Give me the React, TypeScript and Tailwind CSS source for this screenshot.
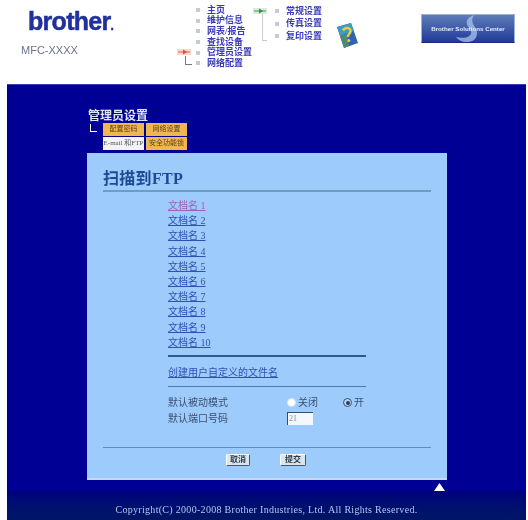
import React from "react";

const serif = "font-['Liberation_Serif','Noto_Sans_CJK_SC',serif]";

const leftNav = ["主页", "维护信息", "网表/报告", "查找设备", "管理员设置", "网络配置"];
const rightNav = ["常规设置", "传真设置", "复印设置"];
const files = ["文档名 1", "文档名 2", "文档名 3", "文档名 4", "文档名 5", "文档名 6", "文档名 7", "文档名 8", "文档名 9", "文档名 10"];

function NavItem({ label }: { label: string }) {
  return (
    <div className="flex h-[10.6px] items-center gap-[7px]">
      <span className="h-[4px] w-[4px] shrink-0 bg-[#c4cbd4]" />
      <span className={`whitespace-nowrap text-[9px] leading-none font-bold text-[#3a3ab8] ${serif}`}>{label}</span>
    </div>
  );
}

function Arrow({ color, box }: { color: string; box: string }) {
  return (
    <svg width="14" height="6" viewBox="0 0 14 6" className="shrink-0">
      <rect x="0" y="0" width="14" height="6" fill={box} />
      <rect x="1" y="2.4" width="12" height="1.2" fill={color} opacity="0.7" />
      <path d="M6 0.5 L10 3 L6 5.5 Z" fill={color} />
    </svg>
  );
}

function HelpBook() {
  return (
    <svg width="24" height="27" viewBox="0 0 24 27" className="mt-[22px] shrink-0">
      <path d="M2 5 L16 1 L23 21 L9 26 Z" fill="#2f62b0" />
      <path d="M2 5 L16 1 L19 9 L5 14 Z" fill="#3d9cc0" />
      <path d="M5 14 L12 12 L14 24 L9 26 Z" fill="#4f8a70" />
      <path d="M8 8.5 C10 5 16 5 15.5 9.5 C15.2 12 12.5 12 13 15" fill="none" stroke="#e8d040" strokeWidth="2.4" />
      <circle cx="13.8" cy="18.5" r="1.5" fill="#e8d040" />
    </svg>
  );
}

function SolutionsCenter() {
  return (
    <div className="relative mt-[14px] ml-[62px] flex h-[29px] w-[94px] shrink-0 items-center justify-center overflow-hidden border border-[#9fb2d8] border-b-[#1c2a80] bg-gradient-to-b from-[#5f7cb8] via-[#3f5ca8] to-[#24389a]">
      <svg width="30" height="29" viewBox="0 0 30 29" className="absolute top-0 left-[30px]">
        <path d="M22 0 C12 4 14 10 18 14 C22 19 16 25 4 22 C10 30 26 29 25 17 C24 11 17 8 22 0 Z" fill="#a9c4e8" opacity="0.75" />
      </svg>
      <span className="relative whitespace-nowrap text-[6.2px] font-bold text-[#e4ecf8] font-['Liberation_Sans',sans-serif]">
        Brother Solutions Center
      </span>
    </div>
  );
}

function Header() {
  return (
    <div className="flex h-[84px] shrink-0 bg-white">
      <div className="w-[177px] shrink-0 pt-[8px] pl-[21px]">
        <div className="pl-[7px] text-[25px] leading-[26px] font-bold tracking-[-0.7px] text-[#20309c] [-webkit-text-stroke:0.5px_#20309c] font-['Liberation_Sans',sans-serif]">
          brother<span className="text-[12px] tracking-normal">.</span>
        </div>
        <div className="mt-[5px] text-[11px] leading-[12px] text-[#6a7390] font-['Liberation_Sans',sans-serif]">MFC-XXXX</div>
      </div>
      <div className="flex w-[19px] shrink-0 flex-col items-start pt-[49px]">
        <Arrow color="#d8503a" box="#fbd8c8" />
        <div className="mt-[1px] ml-[8px] h-[9px] w-[7px] border-b border-l border-[#777]" />
      </div>
      <div className="w-[57px] shrink-0 pt-[5px]">
        {leftNav.map((label) => (
          <NavItem key={label} label={label} />
        ))}
      </div>
      <div className="flex w-[22px] shrink-0 flex-col items-start pt-[8px]">
        <Arrow color="#2e8b57" box="#d8ecd8" />
        <div className="ml-[9px] h-[27px] w-[5px] border-b border-l border-[#ccc]" />
      </div>
      <div className="w-[60px] shrink-0 pt-[6px]">
        {rightNav.map((label) => (
          <div key={label} className="mb-[2px]">
            <NavItem label={label} />
          </div>
        ))}
      </div>
      <HelpBook />
      <SolutionsCenter />
    </div>
  );
}

function Tabs() {
  const cell = `flex h-[13px] items-center justify-center text-[7px] leading-none ${serif}`;
  return (
    <div className="flex">
      <div className="mt-[1px] ml-[2px] mr-[6px] h-[8px] w-[7px] border-b border-l border-white" />
      <div className="grid w-[84px] grid-cols-[42px_42px] gap-y-[1px]">
        <div className={`${cell} mr-[1px] bg-[#f2b650] text-[#5a4020]`}>配置密码</div>
        <div className={`${cell} ml-[1px] bg-[#f2b650] text-[#5a4020]`}>网络设置</div>
        <div className={`${cell} mr-[1px] bg-[#f4f4f4] text-[#555]`}>E-mail 和FTP</div>
        <div className={`${cell} ml-[1px] bg-[#f2b650] text-[#5a4020]`}>安全功能锁</div>
      </div>
    </div>
  );
}

function Panel() {
  return (
    <div className="ml-[80px] h-[327px] w-[360px] border-b-2 border-[#c8d8f8] bg-[#9dcbfb] pt-[16px]">
      <div className="mx-[16px] border-b-2 border-[#6e9cc4] pb-[1px]">
        <div className={`text-[16px] leading-[20px] font-bold tracking-[0.3px] text-[#1c4a94] ${serif}`}>扫描到FTP</div>
      </div>
      <div className="mt-[7px] ml-[81px] w-[198px]">
        {files.map((name, i) => (
          <div
            key={name}
            className={`h-[15.2px] text-[10px] leading-[14px] underline ${serif} ${i === 0 ? "text-[#a060b8]" : "text-[#3050b4]"}`}
          >
            {name}
          </div>
        ))}
        <div className="mt-[4px] border-t-2 border-[#2a5c8c]" />
        <div className={`mt-[9px] h-[21px] border-b border-[#4a7aa4] text-[10px] leading-[14px] text-[#3050b4] underline ${serif}`}>
          创建用户自定义的文件名
        </div>
        <div className={`mt-[8px] flex h-[16px] items-center text-[10px] text-[#3c5070] ${serif}`}>
          <span className="w-[119px]">默认被动模式</span>
          <span className="h-[9px] w-[9px] rounded-full border border-[#d8e4f4] bg-white" />
          <span className="ml-[2px] w-[45px]">关闭</span>
          <span className="flex h-[9px] w-[9px] items-center justify-center rounded-full border border-[#3c5070] bg-[#b8d4f4]">
            <span className="h-[4px] w-[4px] rounded-full bg-[#2c3c58]" />
          </span>
          <span className="ml-[2px]">开</span>
        </div>
        <div className={`flex h-[16px] items-center text-[10px] text-[#3c5070] ${serif}`}>
          <span className="w-[119px]">默认端口号码</span>
          <span className="flex h-[13px] w-[26px] items-center border-t border-l border-[#30507c] bg-[#f4f8fe] pl-px text-[8px] text-[#7a8ca4]">21</span>
        </div>
      </div>
      <div className="mx-[16px] mt-[20px] flex justify-center gap-[30px] border-t border-[#5e90b4] pt-[6px] pr-[2px]">
        <button className={`flex h-[12px] w-[24px] items-center justify-center rounded-[2px] border border-[#44586c] border-t-white border-l-white bg-[#dce4ec] text-[8px] leading-none font-bold text-[#303c50] ${serif}`}>
          取消
        </button>
        <button className={`flex h-[12px] w-[26px] items-center justify-center rounded-[2px] border border-[#44586c] border-t-white border-l-white bg-[#dce4ec] text-[8px] leading-none font-bold text-[#303c50] ${serif}`}>
          提交
        </button>
      </div>
    </div>
  );
}

export default function App() {
  return (
    <div className="flex h-[520px] w-[528px] flex-col overflow-hidden bg-white blur-[0.6px]">
      <Header />
      <div className="ml-[7px] mr-[2px] flex h-[436px] flex-col border-t border-[#3a3ab0] bg-[#000094]">
        <div className="h-[24px] shrink-0" />
        <div className={`ml-[81px] text-[12px] leading-[15px] font-bold text-[#dfe6f8] ${serif}`}>管理员设置</div>
        <div className="mt-[-1px] ml-[81px] h-[30px] shrink-0">
          <Tabs />
        </div>
        <Panel />
        <div className="flex h-[11px] shrink-0 justify-end pr-[81px]">
          <svg width="11" height="8" viewBox="0 0 11 8" className="mt-[3px]">
            <path d="M5.5 0 L11 8 L0 8 Z" fill="#ffffff" />
          </svg>
        </div>
        <div className="flex flex-1 items-center justify-center bg-gradient-to-b from-[#00007c] to-[#001664] pt-[8px]">
          <span className={`whitespace-nowrap text-[10px] tracking-[0.3px] text-[#b8c4ec] ${serif}`}>
            Copyright(C) 2000-2008 Brother Industries, Ltd. All Rights Reserved.
          </span>
        </div>
      </div>
    </div>
  );
}
